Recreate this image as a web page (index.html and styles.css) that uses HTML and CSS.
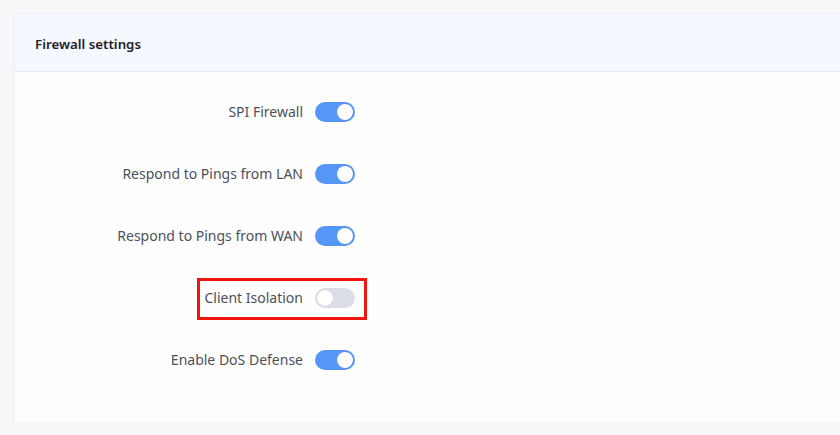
FILE: index.html
```html
<!DOCTYPE html>
<html>
<head>
<title>Firewall settings</title>
<link rel="stylesheet" href="styles.css">
</head>
<body>
<div class="card">
  <div class="card-header">Firewall settings</div>

  <div class="card-body">
    <div class="row">
      <span class="label">SPI Firewall</span>
      <span class="switch on"></span>
    </div>
    <div class="row">
      <span class="label">Respond to Pings from LAN</span>
      <span class="switch on"></span>
    </div>
    <div class="row">
      <span class="label">Respond to Pings from WAN</span>
      <span class="switch on"></span>
    </div>
    <div class="row marked">
      <span class="label">Client Isolation</span>
      <span class="switch"></span>
      <span class="mark"></span>
    </div>
    <div class="row">
      <span class="label">Enable DoS Defense</span>
      <span class="switch on"></span>
    </div>
  </div>
</div>
</body>
</html>
```

FILE: styles.css
```css
body {
  margin: 0;
  padding: 15px 0 0 15px;
  background-color: #f7f7fa;
  font-family: "Noto Sans", sans-serif;
  overflow: hidden;
}

.card {
  width: 900px;
  background-color: #fefefe;
  box-shadow: 0 1px 4px rgba(40, 50, 90, 0.08);
}

.card-header {
  height: 56px;
  line-height: 58px;
  padding-left: 20px;
  background-color: #f5f8ff;
  border-bottom: 1px solid #e4e8f0;
  color: #1d2129;
  font-size: 13.3px;
  font-weight: 600;
}

.card-body {
  padding: 30px 0 52px;
  display: flex;
  flex-direction: column;
  gap: 42px;
}

.row {
  position: relative;
  display: flex;
  align-items: center;
  height: 20px;
}

.label {
  width: 288px;
  padding-right: 12px;
  padding-bottom: 1px;
  text-align: right;
  color: #4b505a;
  font-size: 14px;
}

.switch {
  position: relative;
  width: 40px;
  height: 20px;
  border-radius: 10px;
  background-color: #dcdee7;
}

.switch::after {
  content: "";
  position: absolute;
  top: 2px;
  left: 2px;
  width: 16px;
  height: 16px;
  border-radius: 50%;
  background-color: #fff;
  box-shadow: 0 0 1px rgba(0, 0, 0, 0.2);
}

.switch.on {
  background-color: #5596f7;
}

.switch.on::after {
  left: 22px;
}

.mark {
  position: absolute;
  left: 182px;
  top: -10px;
  width: 164px;
  height: 36px;
  border: 3px solid #f0140c;
}
```
